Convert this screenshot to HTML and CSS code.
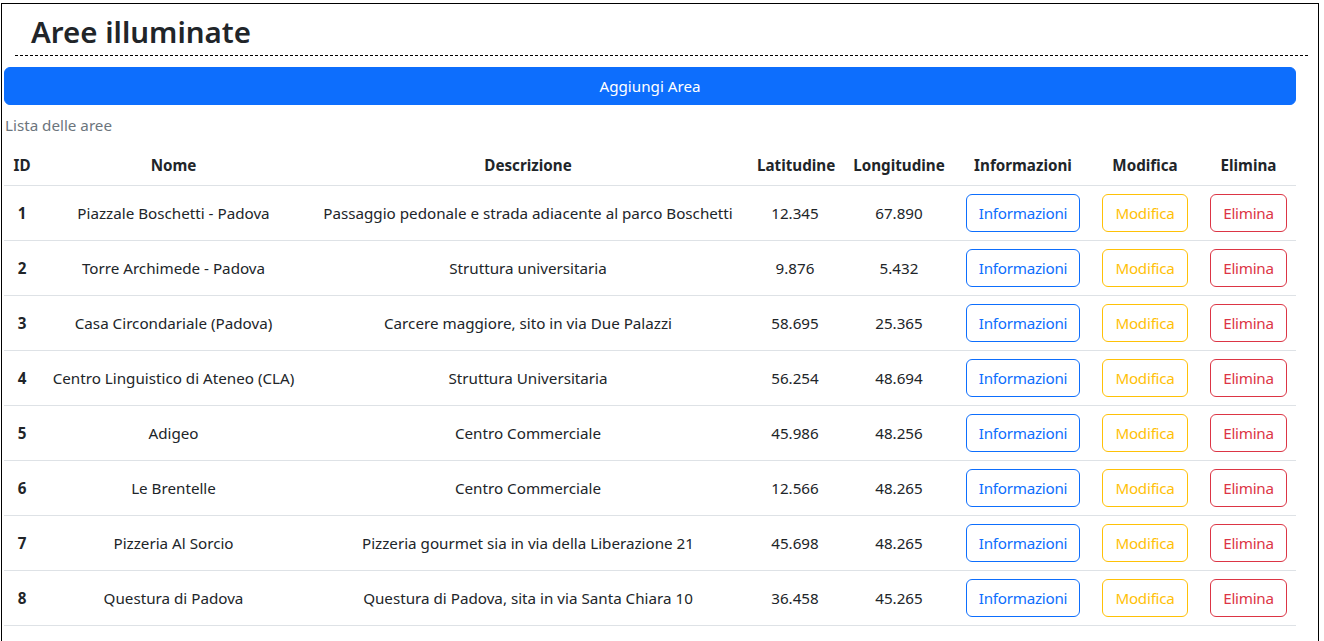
FILE: index.html
```html
<!DOCTYPE html>
<html lang="it">
<head>
<meta charset="utf-8">
<title>Aree illuminate</title>
<link rel="stylesheet" href="styles.css">
</head>
<body>
<div class="page">
  <header class="page-header">
    <h1 class="title">Aree illuminate</h1>
  </header>
  <main class="content">
    <button class="btn btn-primary btn-block">Aggiungi Area</button>
    <table class="table">
      <caption>Lista delle aree</caption>
      <colgroup>
        <col class="c-id"><col class="c-nome"><col class="c-desc"><col class="c-lat"><col class="c-lon"><col class="c-info"><col class="c-mod"><col class="c-del">
      </colgroup>
      <thead>
        <tr><th>ID</th><th>Nome</th><th>Descrizione</th><th>Latitudine</th><th>Longitudine</th><th>Informazioni</th><th>Modifica</th><th>Elimina</th></tr>
      </thead>
      <tbody>
        <tr><th>1</th><td>Piazzale Boschetti - Padova</td><td>Passaggio pedonale e strada adiacente al parco Boschetti</td><td>12.345</td><td>67.890</td><td><button class="btn btn-outline-primary">Informazioni</button></td><td><button class="btn btn-outline-warning">Modifica</button></td><td><button class="btn btn-outline-danger">Elimina</button></td></tr>
        <tr><th>2</th><td>Torre Archimede - Padova</td><td>Struttura universitaria</td><td>9.876</td><td>5.432</td><td><button class="btn btn-outline-primary">Informazioni</button></td><td><button class="btn btn-outline-warning">Modifica</button></td><td><button class="btn btn-outline-danger">Elimina</button></td></tr>
        <tr><th>3</th><td>Casa Circondariale (Padova)</td><td>Carcere maggiore, sito in via Due Palazzi</td><td>58.695</td><td>25.365</td><td><button class="btn btn-outline-primary">Informazioni</button></td><td><button class="btn btn-outline-warning">Modifica</button></td><td><button class="btn btn-outline-danger">Elimina</button></td></tr>
        <tr><th>4</th><td>Centro Linguistico di Ateneo (CLA)</td><td>Struttura Universitaria</td><td>56.254</td><td>48.694</td><td><button class="btn btn-outline-primary">Informazioni</button></td><td><button class="btn btn-outline-warning">Modifica</button></td><td><button class="btn btn-outline-danger">Elimina</button></td></tr>
        <tr><th>5</th><td>Adigeo</td><td>Centro Commerciale</td><td>45.986</td><td>48.256</td><td><button class="btn btn-outline-primary">Informazioni</button></td><td><button class="btn btn-outline-warning">Modifica</button></td><td><button class="btn btn-outline-danger">Elimina</button></td></tr>
        <tr><th>6</th><td>Le Brentelle</td><td>Centro Commerciale</td><td>12.566</td><td>48.265</td><td><button class="btn btn-outline-primary">Informazioni</button></td><td><button class="btn btn-outline-warning">Modifica</button></td><td><button class="btn btn-outline-danger">Elimina</button></td></tr>
        <tr><th>7</th><td>Pizzeria Al Sorcio</td><td>Pizzeria gourmet sia in via della Liberazione 21</td><td>45.698</td><td>48.265</td><td><button class="btn btn-outline-primary">Informazioni</button></td><td><button class="btn btn-outline-warning">Modifica</button></td><td><button class="btn btn-outline-danger">Elimina</button></td></tr>
        <tr><th>8</th><td>Questura di Padova</td><td>Questura di Padova, sita in via Santa Chiara 10</td><td>36.458</td><td>45.265</td><td><button class="btn btn-outline-primary">Informazioni</button></td><td><button class="btn btn-outline-warning">Modifica</button></td><td><button class="btn btn-outline-danger">Elimina</button></td></tr>
      </tbody>
    </table>
  </main>
</div>
</body>
</html>
```

FILE: styles.css
```css
* { box-sizing: border-box; }

html, body {
  margin: 0;
  padding: 0;
  background: #fff;
}

body {
  font-family: "Noto Sans", "Open Sans", sans-serif;
  font-size: 15.2px;
  line-height: 24px;
  color: #212529;
}

.page {
  margin: 3px 5px 0 1px;
  border: 1px solid #000;
  border-bottom: none;
  min-height: 700px;
}

.page-header {
  margin: 0 10px 11px 13px;
  padding: 9px 0 4px 16px;
  border-bottom: 1px dashed #000;
}

.title {
  margin: 0;
  font-size: 29.5px;
  line-height: 38px;
  font-weight: 600;
  color: #212529;
}

.content {
  margin: 0 22px 0 2px;
}

.btn {
  display: inline-block;
  font-family: inherit;
  font-size: 15.2px;
  line-height: 24px;
  font-weight: 400;
  padding: 6px 12px;
  border: 1px solid transparent;
  border-radius: 6px;
  background: transparent;
  text-align: center;
  cursor: pointer;
}

.btn-block {
  display: block;
  width: 100%;
}

.btn-primary {
  background: #0d6efd;
  border-color: #0d6efd;
  color: #fff;
}

.btn-outline-primary,
.btn-outline-warning,
.btn-outline-danger {
  letter-spacing: -0.25px;
}

.btn-outline-primary { color: #0d6efd; border-color: #0d6efd; }
.btn-outline-warning { color: #ffc107; border-color: #ffc107; }
.btn-outline-danger { color: #dc3545; border-color: #dc3545; }

.table {
  width: 100%;
  border-collapse: collapse;
  table-layout: fixed;
  caption-side: top;
}

.table caption {
  text-align: left;
  padding: 8px 0 8px 1px;
  color: #6c757d;
}

.c-id { width: 36px; }
.c-nome { width: 267px; }
.c-desc { width: 442px; }
.c-lat { width: 92px; }
.c-lon { width: 116px; }
.c-info { width: 132px; }
.c-mod { width: 112px; }
.c-del { width: 95px; }

.table th,
.table td {
  padding: 8px 8px;
  text-align: center;
  vertical-align: middle;
  border-bottom: 1px solid #dee2e6;
  white-space: nowrap;
}

.table th {
  font-weight: 700;
}

.table thead th {
  vertical-align: bottom;
}
```
